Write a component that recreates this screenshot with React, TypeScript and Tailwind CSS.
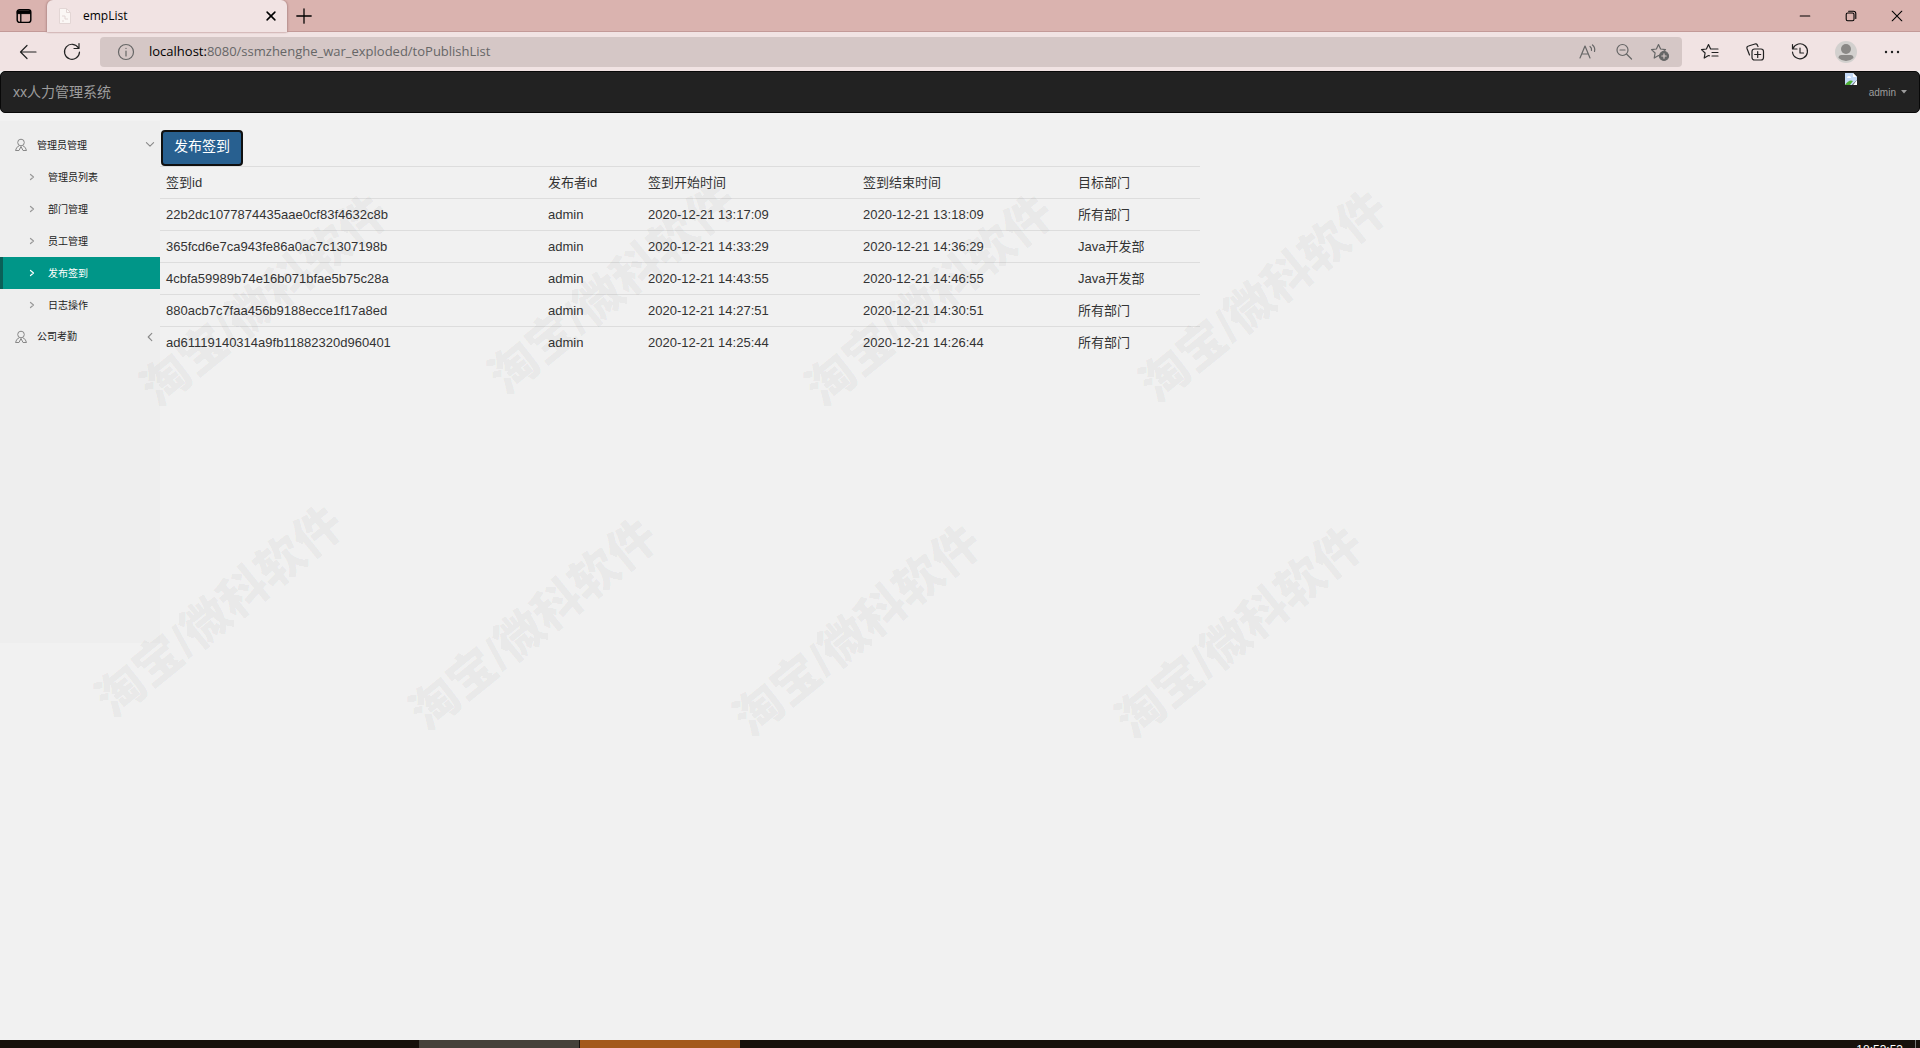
import React from 'react'

interface SignRecord {
  id: string;
  publisher: string;
  start: string;
  end: string;
  dept: string;
}

const records: SignRecord[] = [
  { id: '22b2dc1077874435aae0cf83f4632c8b', publisher: 'admin', start: '2020-12-21 13:17:09', end: '2020-12-21 13:18:09', dept: '所有部门' },
  { id: '365fcd6e7ca943fe86a0ac7c1307198b', publisher: 'admin', start: '2020-12-21 14:33:29', end: '2020-12-21 14:36:29', dept: 'Java开发部' },
  { id: '4cbfa59989b74e16b071bfae5b75c28a', publisher: 'admin', start: '2020-12-21 14:43:55', end: '2020-12-21 14:46:55', dept: 'Java开发部' },
  { id: '880acb7c7faa456b9188ecce1f17a8ed', publisher: 'admin', start: '2020-12-21 14:27:51', end: '2020-12-21 14:30:51', dept: '所有部门' },
  { id: 'ad61119140314a9fb11882320d960401', publisher: 'admin', start: '2020-12-21 14:25:44', end: '2020-12-21 14:26:44', dept: '所有部门' },
]

const menuItems = ['管理员列表', '部门管理', '员工管理', '发布签到', '日志操作']

const watermarks = [
  'left-[265px] top-[301px]',
  'left-[613px] top-[289px]',
  'left-[930px] top-[301px]',
  'left-[1264px] top-[297px]',
  'left-[220px] top-[612px]',
  'left-[534px] top-[625px]',
  'left-[858px] top-[631px]',
  'left-[1240px] top-[633px]',
]

interface IconProps {
  className?: string;
  children: React.ReactNode;
}

function Icon({ className = 'size-5', children }: IconProps) {
  return (
    <svg viewBox="0 0 20 20" className={`${className} shrink-0`} fill="none" stroke="currentColor" strokeWidth="1.2" strokeLinecap="round" strokeLinejoin="round" aria-hidden="true">
      {children}
    </svg>
  )
}

const starPath = 'M8.5 2.5 L10.6 7 L15.5 7.6 L11.9 11 L12.8 16 L8.5 13.6 L4.2 16 L5.1 11 L1.5 7.6 L6.4 7 Z'

function TabBar() {
  return (
    <div className="flex h-8 items-stretch border-b border-[#c39a98] bg-[#dab3af] text-black">
      <button aria-label="标签页操作" className="flex w-[47px] items-center justify-center">
        <Icon className="size-4">
          <rect x="1.5" y="2" width="17" height="16" rx="3" strokeWidth="1.8" />
          <path d="M2 3.5h16v3.5H2z" fill="currentColor" />
          <path d="M6 7v11" strokeWidth="1.6" />
        </Icon>
      </button>
      <div className="-mb-px flex w-60 items-center rounded-t-md bg-[#f1e3e3] pl-3 shadow-[-1px_0_2px_#b58f8d,1px_0_2px_#b58f8d]">
        <svg viewBox="0 0 12 16" className="h-4 w-3" fill="#fbf7f5" stroke="#e3d6d5" aria-hidden="true">
          <path d="M.5.5h7l4 4v11H.5z" />
          <path d="M7.5.5v4h4M3 8h3v3h3M3 13h2" fill="none" />
        </svg>
        <span className="ml-3 flex-1 text-xs">empList</span>
        <button aria-label="关闭标签页" className="flex w-8 items-center justify-center">
          <Icon className="size-3"><path d="M3.5 3.5l13 13M16.5 3.5l-13 13" strokeWidth="2.6" /></Icon>
        </button>
      </div>
      <button aria-label="新建标签页" className="flex w-[34px] items-center justify-center">
        <Icon className="size-4"><path d="M10 1v18M1 10h18" strokeWidth="1.6" /></Icon>
      </button>
      <div className="flex-1" />
      <button aria-label="最小化" className="flex w-[46px] items-center justify-center">
        <Icon className="size-3"><path d="M2 10h16" strokeWidth="1.8" /></Icon>
      </button>
      <button aria-label="还原" className="flex w-[46px] items-center justify-center">
        <Icon className="size-3">
          <rect x="2" y="5" width="13" height="13" rx="2.5" strokeWidth="1.8" />
          <path d="M6 2h8a4 4 0 0 1 4 4v8" strokeWidth="1.8" />
        </Icon>
      </button>
      <button aria-label="关闭" className="flex w-[46px] items-center justify-center">
        <Icon className="size-3"><path d="M2 2l16 16M18 2L2 18" strokeWidth="1.8" /></Icon>
      </button>
    </div>
  )
}

function AddressBar() {
  return (
    <div className="flex h-[39px] items-center bg-[#f1e3e3] text-[#222]">
      <button aria-label="后退" className="flex w-14 items-center justify-center">
        <Icon><path d="M18 10H2.5M9 3.5L2.5 10L9 16.5" /></Icon>
      </button>
      <button aria-label="刷新" className="flex w-8 items-center justify-center">
        <Icon><path d="M16.5 6A7.5 7.500 0 1 0 17.5 10M17 1.5v5h-5" /></Icon>
      </button>
      <div className="ml-3 flex h-[30px] flex-1 items-center rounded bg-[#d5c7c6] pl-4 text-[#666]">
        <Icon>
          <circle cx="10" cy="10" r="7.5" />
          <path d="M10 9v5M10 6.3v.2" />
        </Icon>
        <div className="ml-[13px] flex-1 text-[13px]"><span className="text-black">localhost:</span>8080/ssmzhenghe_war_exploded/toPublishList</div>
        <div className="flex items-center gap-4 pr-3">
          <button aria-label="大声朗读">
            <Icon>
              <path d="M2 16L7 4l5 12M4 12h6M12 4.500q2 1.500 1.500 4M14.500 3q3 2.500 2 6.500" />
            </Icon>
          </button>
          <button aria-label="缩小">
            <Icon>
              <circle cx="8.5" cy="8" r="5.5" />
              <path d="M12.5 12l5 5M6 8h5" />
            </Icon>
          </button>
          <button aria-label="收藏此页">
            <Icon>
              <path d={starPath} />
              <circle cx="14" cy="14" r="4.5" fill="currentColor" />
              <path d="M14 11.8v4.4M11.8 14h4.400" stroke="#d5c7c6" />
            </Icon>
          </button>
        </div>
      </div>
      <div className="flex items-center gap-[25px] px-[18px]">
        <button aria-label="收藏夹">
          <Icon>
            <path d="M9.500 13.8L8.5 13.500L4.200 16L5.100 11L1.500 7.600L6.400 7L8.500 2.500L10.600 7H18M12 10.500h6M12 14h6" />
          </Icon>
        </button>
        <button aria-label="集锦">
          <Icon>
            <rect x="7" y="7" width="11.500" height="11" rx="2.500" />
            <path d="M12.700 9.500v6M9.700 12.500h6M4.500 13L2 6.500Q1.500 4.500 3.500 4L10 2q2-.5 2.500 1.500L13 4.500" />
          </Icon>
        </button>
        <button aria-label="历史记录">
          <Icon>
            <path d="M3 6.500A7.500 7.500 0 1 1 2.500 10M2.500 2.500v4.500H7M10 6v5h3.500" />
          </Icon>
        </button>
        <button aria-label="个人资料">
          <svg viewBox="0 0 22 22" className="size-[22px]" aria-hidden="true">
            <circle cx="11" cy="11" r="11" fill="#d2d0ce" />
            <circle cx="11" cy="8" r="5" fill="#8a8886" />
            <path d="M3.500 17q0-3 3-3h9q3 0 3 3a11 11 0 0 1-15 0z" fill="#8a8886" />
          </svg>
        </button>
        <button aria-label="更多">
          <Icon>
            <path d="M4 10h.01M10 10h.01M16 10h.01" strokeWidth="2.4" />
          </Icon>
        </button>
      </div>
    </div>
  )
}

function Navbar() {
  return (
    <header className="flex h-[42px] items-center rounded-[5px] border border-[#080808] bg-[#222] px-3 text-[#9d9d9d]">
      <a href="#" className="text-sm">xx人力管理系统</a>
      <div className="ml-auto flex items-center self-stretch">
        {/* avatar that could not be loaded */}
        <svg viewBox="0 0 16 16" className="mr-2.5 size-4 self-start" aria-hidden="true">
          <path d="M2 1h8l4 4v3l-5 5H2z" fill="#c4d9f7" />
          <path d="M10 1v4h4z" fill="#fff" />
          <path d="M4 6q0-2 2-2t2 2z" fill="#fff" />
          <path d="M2 13q4-6 8-4l-3 4z" fill="#4fae35" />
          <path d="M14 8v5h-4z" fill="#fff" />
        </svg>
        <button className="flex items-center gap-[5px] text-[10px]">
          admin
          <svg viewBox="0 0 6 4" className="h-1 w-1.5" fill="currentColor" aria-hidden="true"><path d="M0 0h6L3 3.500z" /></svg>
        </button>
      </div>
    </header>
  )
}

function UserIcon() {
  return (
    <svg viewBox="0 0 14 14" className="size-3.5" fill="none" stroke="#888" aria-hidden="true">
      <circle cx="7" cy="4.5" r="3.3" />
      <path d="M5.5 7.5Q2 9 1.5 12.5h3.500L7 8.500l2 4h3.500Q12 9 8.500 7.500" />
    </svg>
  )
}

function Sidebar() {
  return (
    <nav className="mt-2 min-h-[522px] w-40 shrink-0 self-start bg-[#eee] pt-2 text-[10px] text-[#222]">
      <a href="#" className="flex h-8 items-center pl-3.5 pr-1">
        <UserIcon />
        <span className="ml-[9px] flex-1">管理员管理</span>
        <Icon className="size-3"><path d="M4 6l6 6l6-6" stroke="#888" strokeWidth="1.8" /></Icon>
      </a>
      <ul>
        {menuItems.map((item) => (
          <li key={item}>
            <a
              href="#"
              className={item === '发布签到'
                ? 'flex h-8 items-center border-l-[3px] border-[#0a6058] bg-[#009688] pl-6 text-white'
                : 'flex h-8 items-center border-l-[3px] border-transparent pl-6'}
            >
              <Icon className={item === '发布签到' ? 'size-2.5' : 'size-2.5 text-[#999]'}><path d="M7 5l6 5l-6 5" strokeWidth="2.4" /></Icon>
              <span className="ml-[11px]">{item}</span>
            </a>
          </li>
        ))}
      </ul>
      <a href="#" className="flex h-[31px] items-center pl-3.5 pr-1">
        <UserIcon />
        <span className="ml-[9px] flex-1">公司考勤</span>
        <Icon className="size-3"><path d="M13 4l-6 6l6 6" stroke="#888" strokeWidth="1.8" /></Icon>
      </a>
    </nav>
  )
}

function SignTable() {
  return (
    <table className="w-[1040px] table-fixed text-left text-[13px] leading-[19px] text-[#333]">
      <thead>
        <tr className="border-t border-[#ddd]">
          <th className="w-[382px] p-1.5 font-normal">签到id</th>
          <th className="w-[100px] p-1.5 font-normal">发布者id</th>
          <th className="w-[215px] p-1.5 font-normal">签到开始时间</th>
          <th className="w-[215px] p-1.5 font-normal">签到结束时间</th>
          <th className="p-1.5 font-normal">目标部门</th>
        </tr>
      </thead>
      <tbody>
        {records.map((record) => (
          <tr key={record.id} className="border-t border-[#ddd]">
            <td className="p-1.5">{record.id}</td>
            <td className="p-1.5">{record.publisher}</td>
            <td className="p-1.5">{record.start}</td>
            <td className="p-1.5">{record.end}</td>
            <td className="p-1.5">{record.dept}</td>
          </tr>
        ))}
      </tbody>
    </table>
  )
}

function Taskbar() {
  return (
    <div className="flex h-2 overflow-hidden bg-[#17100b]">
      <div className="ml-[419px] w-40 bg-[#45413a]" />
      <div className="ml-px w-40 bg-[#a3591b]" />
      <div className="ml-auto flex border-r border-[#777] pr-3 pt-1 text-xs leading-3 text-white">18:53:53</div>
      <div className="w-1" />
    </div>
  )
}

function App() {
  return (
    <div className="relative flex min-h-screen flex-col overflow-hidden bg-[#f1f1f1] font-['Liberation_Sans','Noto_Sans_CJK_SC',sans-serif]">
      <div className="font-['Open_Sans','Noto_Sans_CJK_SC',sans-serif]">
        <TabBar />
        <AddressBar />
      </div>
      <Navbar />
      <div className="flex flex-1">
        <Sidebar />
        <main className="min-w-0 flex-1 pt-[17px]">
          <button className="ml-px flex h-9 items-center rounded border-2 border-[#101010] bg-[#286090] px-[11px] pb-1 text-sm text-white">
            发布签到
          </button>
          <SignTable />
        </main>
      </div>
      <Taskbar />
      <div className="pointer-events-none select-none text-5xl font-black text-black/5" aria-hidden="true">
        {watermarks.map((place) => (
          <span key={place} className={`absolute -translate-x-1/2 -translate-y-1/2 -rotate-39 whitespace-nowrap ${place}`}>
            淘宝/微科软件
          </span>
        ))}
      </div>
    </div>
  )
}

export default App
